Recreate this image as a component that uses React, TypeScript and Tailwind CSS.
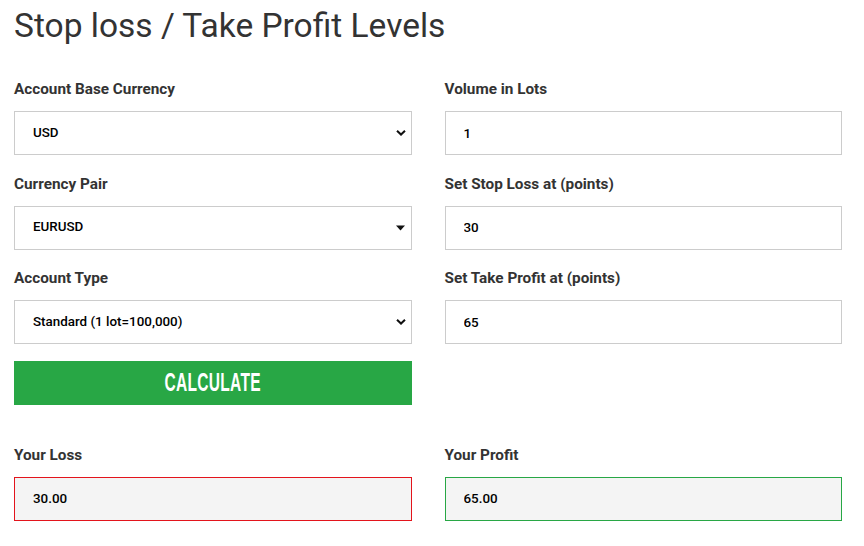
import React, { useState } from "react";

const labelCls = "block text-[15.3px] leading-5 font-bold text-[#333]";
const boxCls =
    "h-[44px] w-full border border-[#cccccc] bg-white pl-[18px] pr-10 text-[13.4px] font-medium text-black outline-none appearance-none";

function Chevron() {
    return (
        <svg width="10" height="7" viewBox="0 0 10 7" className="pointer-events-none absolute right-[6px] top-1/2 -translate-y-1/2">
            <path d="M1 1.2 L5 5 L9 1.2" fill="none" stroke="#111" strokeWidth="2" />
        </svg>
    );
}

function Triangle() {
    return (
        <svg width="9" height="6" viewBox="0 0 9 6" className="pointer-events-none absolute right-[7px] top-1/2 -translate-y-1/2">
            <path d="M0 0.5 H9 L4.5 5.5 Z" fill="#111" />
        </svg>
    );
}

function Field({ label, children }: { label: string; children: React.ReactNode }) {
    return (
        <div className="flex flex-col">
            <label className={labelCls}>{label}</label>
            <div className="relative mt-3">{children}</div>
        </div>
    );
}

export default function App() {
    const [base, setBase] = useState("USD");
    const [pair, setPair] = useState("EURUSD");
    const [type, setType] = useState("standard");
    const [lots, setLots] = useState("1");
    const [sl, setSl] = useState("30");
    const [tp, setTp] = useState("65");

    return (
        <div className="min-h-[546px] bg-white pl-[14px] pr-[22px] pt-[6px]" style={{ fontFamily: "Roboto, 'Noto Sans', sans-serif" }}>
            <h1 className="text-[33.5px] leading-10 font-normal text-[#333]">Stop loss / Take Profit Levels</h1>

            <div className="mt-[33px] grid grid-cols-2 gap-x-[33px]">
                <div className="flex flex-col gap-[18.5px]">
                    <Field label="Account Base Currency">
                        <select className={boxCls} value={base} onChange={e => setBase(e.target.value)}>
                            <option>USD</option>
                            <option>EUR</option>
                            <option>GBP</option>
                        </select>
                        <Chevron />
                    </Field>
                    <Field label="Currency Pair">
                        <select className={boxCls} value={pair} onChange={e => setPair(e.target.value)}>
                            <option>EURUSD</option>
                            <option>GBPUSD</option>
                            <option>USDJPY</option>
                        </select>
                        <Triangle />
                    </Field>
                    <Field label="Account Type">
                        <select className={boxCls} value={type} onChange={e => setType(e.target.value)}>
                            <option value="standard">Standard (1 lot=100,000)</option>
                            <option value="mini">Mini (1 lot=10,000)</option>
                            <option value="micro">Micro (1 lot=1,000)</option>
                        </select>
                        <Chevron />
                    </Field>
                    <button className="-mt-[2px] flex h-[44px] w-full items-center justify-center bg-[#28a745] text-white">
                        <span
                            className="inline-block scale-x-[0.62] text-[25px] font-bold leading-none tracking-[0.5px]"
                            style={{ fontFamily: "'Liberation Sans', Arial, sans-serif" }}
                        >
                            CALCULATE
                        </span>
                    </button>
                </div>

                <div className="flex flex-col gap-[18.5px]">
                    <Field label="Volume in Lots">
                        <input className={boxCls} value={lots} onChange={e => setLots(e.target.value)} />
                    </Field>
                    <Field label="Set Stop Loss at (points)">
                        <input className={boxCls} value={sl} onChange={e => setSl(e.target.value)} />
                    </Field>
                    <Field label="Set Take Profit at (points)">
                        <input className={boxCls} value={tp} onChange={e => setTp(e.target.value)} />
                    </Field>
                </div>
            </div>

            <div className="mt-[40px] grid grid-cols-2 gap-x-[33px]">
                <Field label="Your Loss">
                    <input readOnly className={boxCls + " !bg-[#f4f4f4] !border-[#e3141c]"} value="30.00" />
                </Field>
                <Field label="Your Profit">
                    <input readOnly className={boxCls + " !bg-[#f4f4f4] !border-[#28a745]"} value="65.00" />
                </Field>
            </div>
        </div>
    );
}
